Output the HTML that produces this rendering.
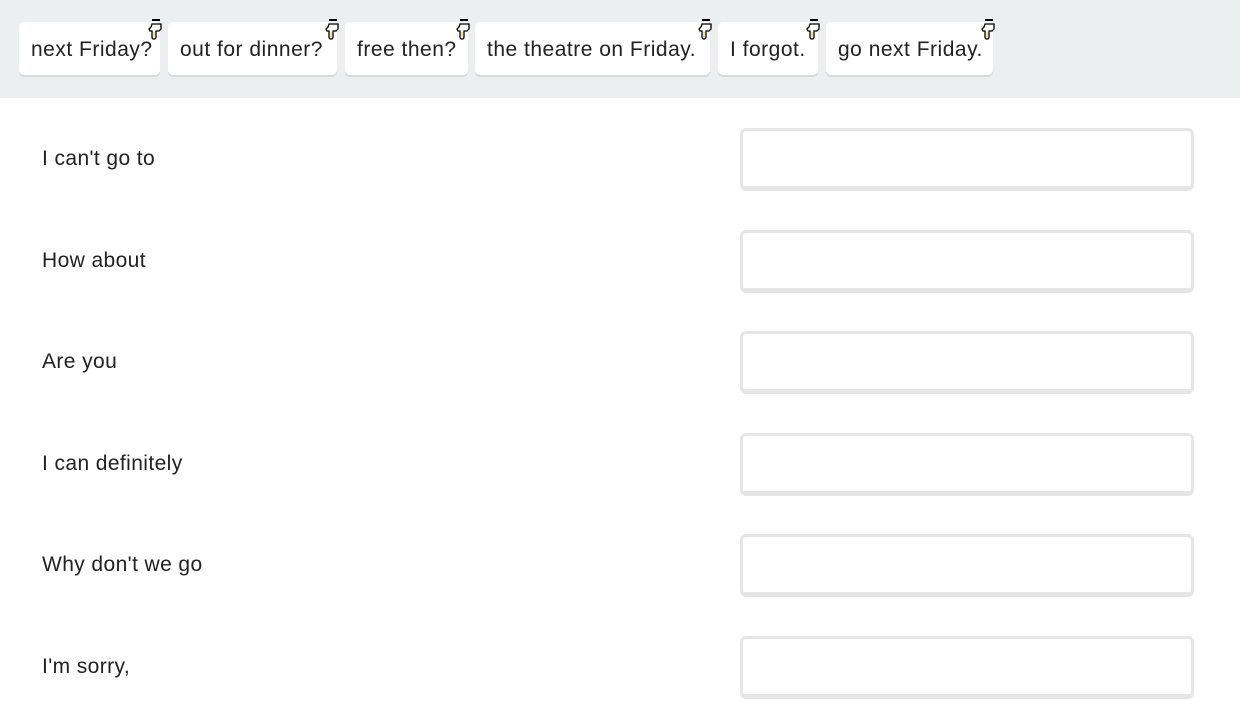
<!DOCTYPE html>
<html><head><meta charset="utf-8"><style>
body{margin:0;width:1240px;height:708px;background:#fff;font-family:"Liberation Sans",sans-serif;overflow:hidden;position:relative}
.bar{position:absolute;left:0;top:0;width:1240px;height:98px;background:#eceff0}
.chip{position:absolute;top:22px;height:53px;background:#fff;border-radius:5px;box-shadow:0 2px 0 #d6d9da;font-size:21px;letter-spacing:0.5px;color:#222;line-height:56px;padding-left:12px;box-sizing:border-box;white-space:nowrap}
.chip svg{position:absolute;right:-3px;top:-3px}
.lbl{position:absolute;left:42px;font-size:21px;letter-spacing:0.4px;color:#222}
.inp{position:absolute;left:740px;width:454px;height:63px;box-sizing:border-box;border:3px solid #e6e6e6;border-bottom-width:5px;border-radius:6px}
</style></head><body>
<div class="bar"></div>
<svg width="0" height="0" style="position:absolute"><defs><symbol id="h" viewBox="0 0 16 22"><rect x="5" y="0" width="8" height="2" fill="#000"/><path d="M5 5h9v5l-2 2h-3v6q0 2-2 2t-2-2v-6H3l-1-2 2-2z" fill="#fff" stroke="#000" stroke-width="1.3"/><path d="M7 13v5" stroke="#e8a030" stroke-width="0.8"/></symbol></defs></svg>
<div class="chip" style="left:19px;width:141px">next Friday?<svg width="16" height="22"><use href="#h"/></svg></div>
<div class="chip" style="left:168px;width:169px">out for dinner?<svg width="16" height="22"><use href="#h"/></svg></div>
<div class="chip" style="left:345px;width:123px">free then?<svg width="16" height="22"><use href="#h"/></svg></div>
<div class="chip" style="left:475px;width:235px">the theatre on Friday.<svg width="16" height="22"><use href="#h"/></svg></div>
<div class="chip" style="left:718px;width:100px">I forgot.<svg width="16" height="22"><use href="#h"/></svg></div>
<div class="chip" style="left:826px;width:167px">go next Friday.<svg width="16" height="22"><use href="#h"/></svg></div>

<div class="lbl" style="top:147px">I can't go to</div><div class="inp" style="top:128px"></div>
<div class="lbl" style="top:249px">How about</div><div class="inp" style="top:230px"></div>
<div class="lbl" style="top:350px">Are you</div><div class="inp" style="top:331px"></div>
<div class="lbl" style="top:452px">I can definitely</div><div class="inp" style="top:433px"></div>
<div class="lbl" style="top:553px">Why don't we go</div><div class="inp" style="top:534px"></div>
<div class="lbl" style="top:655px">I'm sorry,</div><div class="inp" style="top:636px"></div>
</body></html>
